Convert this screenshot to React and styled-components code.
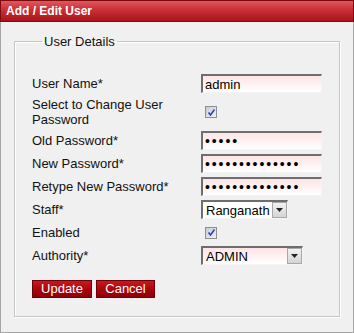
import React from "react";
import styled, { createGlobalStyle } from "styled-components";

const GlobalStyle = createGlobalStyle`
  body {
    margin: 0;
    background: #ffffff;
    font-family: "Liberation Sans", Arial, sans-serif;
  }
`;

const Panel = styled.div`
  width: 354px;
  height: 333px;
  box-sizing: border-box;
  background: #f0f0f0;
  border: 1px solid #a6a6a6;
  border-top: none;
  display: flex;
  flex-direction: column;
`;

const Header = styled.div`
  height: 22px;
  box-sizing: border-box;
  margin: 0 -1px;
  padding: 0 5px;
  display: flex;
  align-items: center;
  background: linear-gradient(#de585d, #c92f35 45%, #a8141c);
  border: 1px solid #7e0a0e;
  color: #ffffff;
  font-size: 12px;
  font-weight: bold;
`;

const Fieldset = styled.fieldset`
  margin: 12px 13px 0 13px;
  padding: 25px 16px 0 17px;
  height: 283px;
  box-sizing: border-box;
  border: 1px solid #c6c6c6;
  box-shadow: inset 1px 1px 0 #ffffff, 1px 1px 0 #ffffff;
`;

const Legend = styled.legend`
  padding: 0 2px;
  margin-left: 10px;
  font-size: 13px;
  color: #111;
  line-height: 15px;
`;

const Form = styled.div`
  display: grid;
  grid-template-columns: 169px auto;
  row-gap: 4px;
  align-items: center;
`;

const Label = styled.label`
  font-size: 13px;
  line-height: 15px;
  color: #111;
  max-width: 150px;
`;

const Field = styled.div`
  display: flex;
  align-items: center;
  min-height: 19px;
`;

const Input = styled.input`
  width: 121px;
  height: 19px;
  box-sizing: border-box;
  padding: 0 2px;
  border: 1px solid #f4f4f4;
  border-top: 2px solid #6e6e6e;
  border-left: 2px solid #6e6e6e;
  background: linear-gradient(#fde4e4, #ffffff);
  font-family: "Liberation Sans", Arial, sans-serif;
  font-size: ${(p) => (p.type === "password" ? "14px" : "13px")};
  letter-spacing: ${(p) => (p.type === "password" ? "1.9px" : "0")};
  color: #000;
  outline: none;
`;

const Check = styled.span`
  width: 12px;
  height: 12px;
  box-sizing: border-box;
  margin-left: 4px;
  border: 1px solid #8f8f8f;
  background: linear-gradient(135deg, #c8ccd8, #eef0f6);
  display: flex;
  align-items: center;
  justify-content: center;
`;

const SelectBox = styled.div`
  width: ${(p) => p.width}px;
  height: 19px;
  box-sizing: border-box;
  display: flex;
  border: 1px solid #f4f4f4;
  border-top: 2px solid #6e6e6e;
  border-left: 2px solid #6e6e6e;
  background: ${(p) => (p.tinted ? "linear-gradient(#fde4e4, #ffffff)" : "#ffffff")};
`;

const Select = styled.select`
  flex: 1;
  min-width: 0;
  appearance: none;
  border: none;
  background: transparent;
  padding: 0 0 0 3px;
  font-family: "Liberation Sans", Arial, sans-serif;
  font-size: 13px;
  color: #000;
  outline: none;
`;

const Arrow = styled.span`
  width: 15px;
  box-sizing: border-box;
  margin: 0 0 0 1px;
  background: linear-gradient(#f2f2f2, #d4d4d4);
  border: 1px solid #a8a8a8;
  display: flex;
  align-items: center;
  justify-content: center;
`;

const Buttons = styled.div`
  display: flex;
  gap: 4px;
  margin-top: 15px;
`;

const Button = styled.button`
  width: ${(p) => p.width}px;
  height: 18px;
  padding: 0;
  box-sizing: border-box;
  border: 1px solid #6e0006;
  background: linear-gradient(#c81820, #a8050c 55%, #8c0006);
  color: #ffffff;
  font-family: "Liberation Sans", Arial, sans-serif;
  font-size: 13px;
  line-height: 16px;
  cursor: pointer;
`;

const CheckMark = () => (
  <svg width="9" height="9" viewBox="0 0 9 9">
    <path d="M1.5 4.5 L3.5 7 L7.5 1.5" fill="none" stroke="#2a44b8" strokeWidth="1.6" />
  </svg>
);

const DownArrow = () => (
  <svg width="7" height="4" viewBox="0 0 7 4">
    <path d="M0 0 H7 L3.5 4 Z" fill="#222" />
  </svg>
);

const Dropdown = ({ width, tinted, value }) => (
  <SelectBox width={width} tinted={tinted}>
    <Select defaultValue={value}>
      <option>{value}</option>
    </Select>
    <Arrow>
      <DownArrow />
    </Arrow>
  </SelectBox>
);

export default function App() {
  return (
    <>
      <GlobalStyle />
      <Panel>
        <Header>Add / Edit User</Header>
        <Fieldset>
          <Legend>User Details</Legend>
          <Form>
            <Label>User Name*</Label>
            <Field>
              <Input type="text" defaultValue="admin" />
            </Field>

            <Label>Select to Change User Password</Label>
            <Field>
              <Check>
                <CheckMark />
              </Check>
            </Field>

            <Label>Old Password*</Label>
            <Field>
              <Input type="password" defaultValue="admin" />
            </Field>

            <Label>New Password*</Label>
            <Field>
              <Input type="password" defaultValue="newpassword123" />
            </Field>

            <Label>Retype New Password*</Label>
            <Field>
              <Input type="password" defaultValue="newpassword123" />
            </Field>

            <Label>Staff*</Label>
            <Field>
              <Dropdown width={87} value="Ranganath" />
            </Field>

            <Label>Enabled</Label>
            <Field>
              <Check>
                <CheckMark />
              </Check>
            </Field>

            <Label>Authority*</Label>
            <Field>
              <Dropdown width={102} tinted value="ADMIN" />
            </Field>
          </Form>
          <Buttons>
            <Button width={60}>Update</Button>
            <Button width={59}>Cancel</Button>
          </Buttons>
        </Fieldset>
      </Panel>
    </>
  );
}
